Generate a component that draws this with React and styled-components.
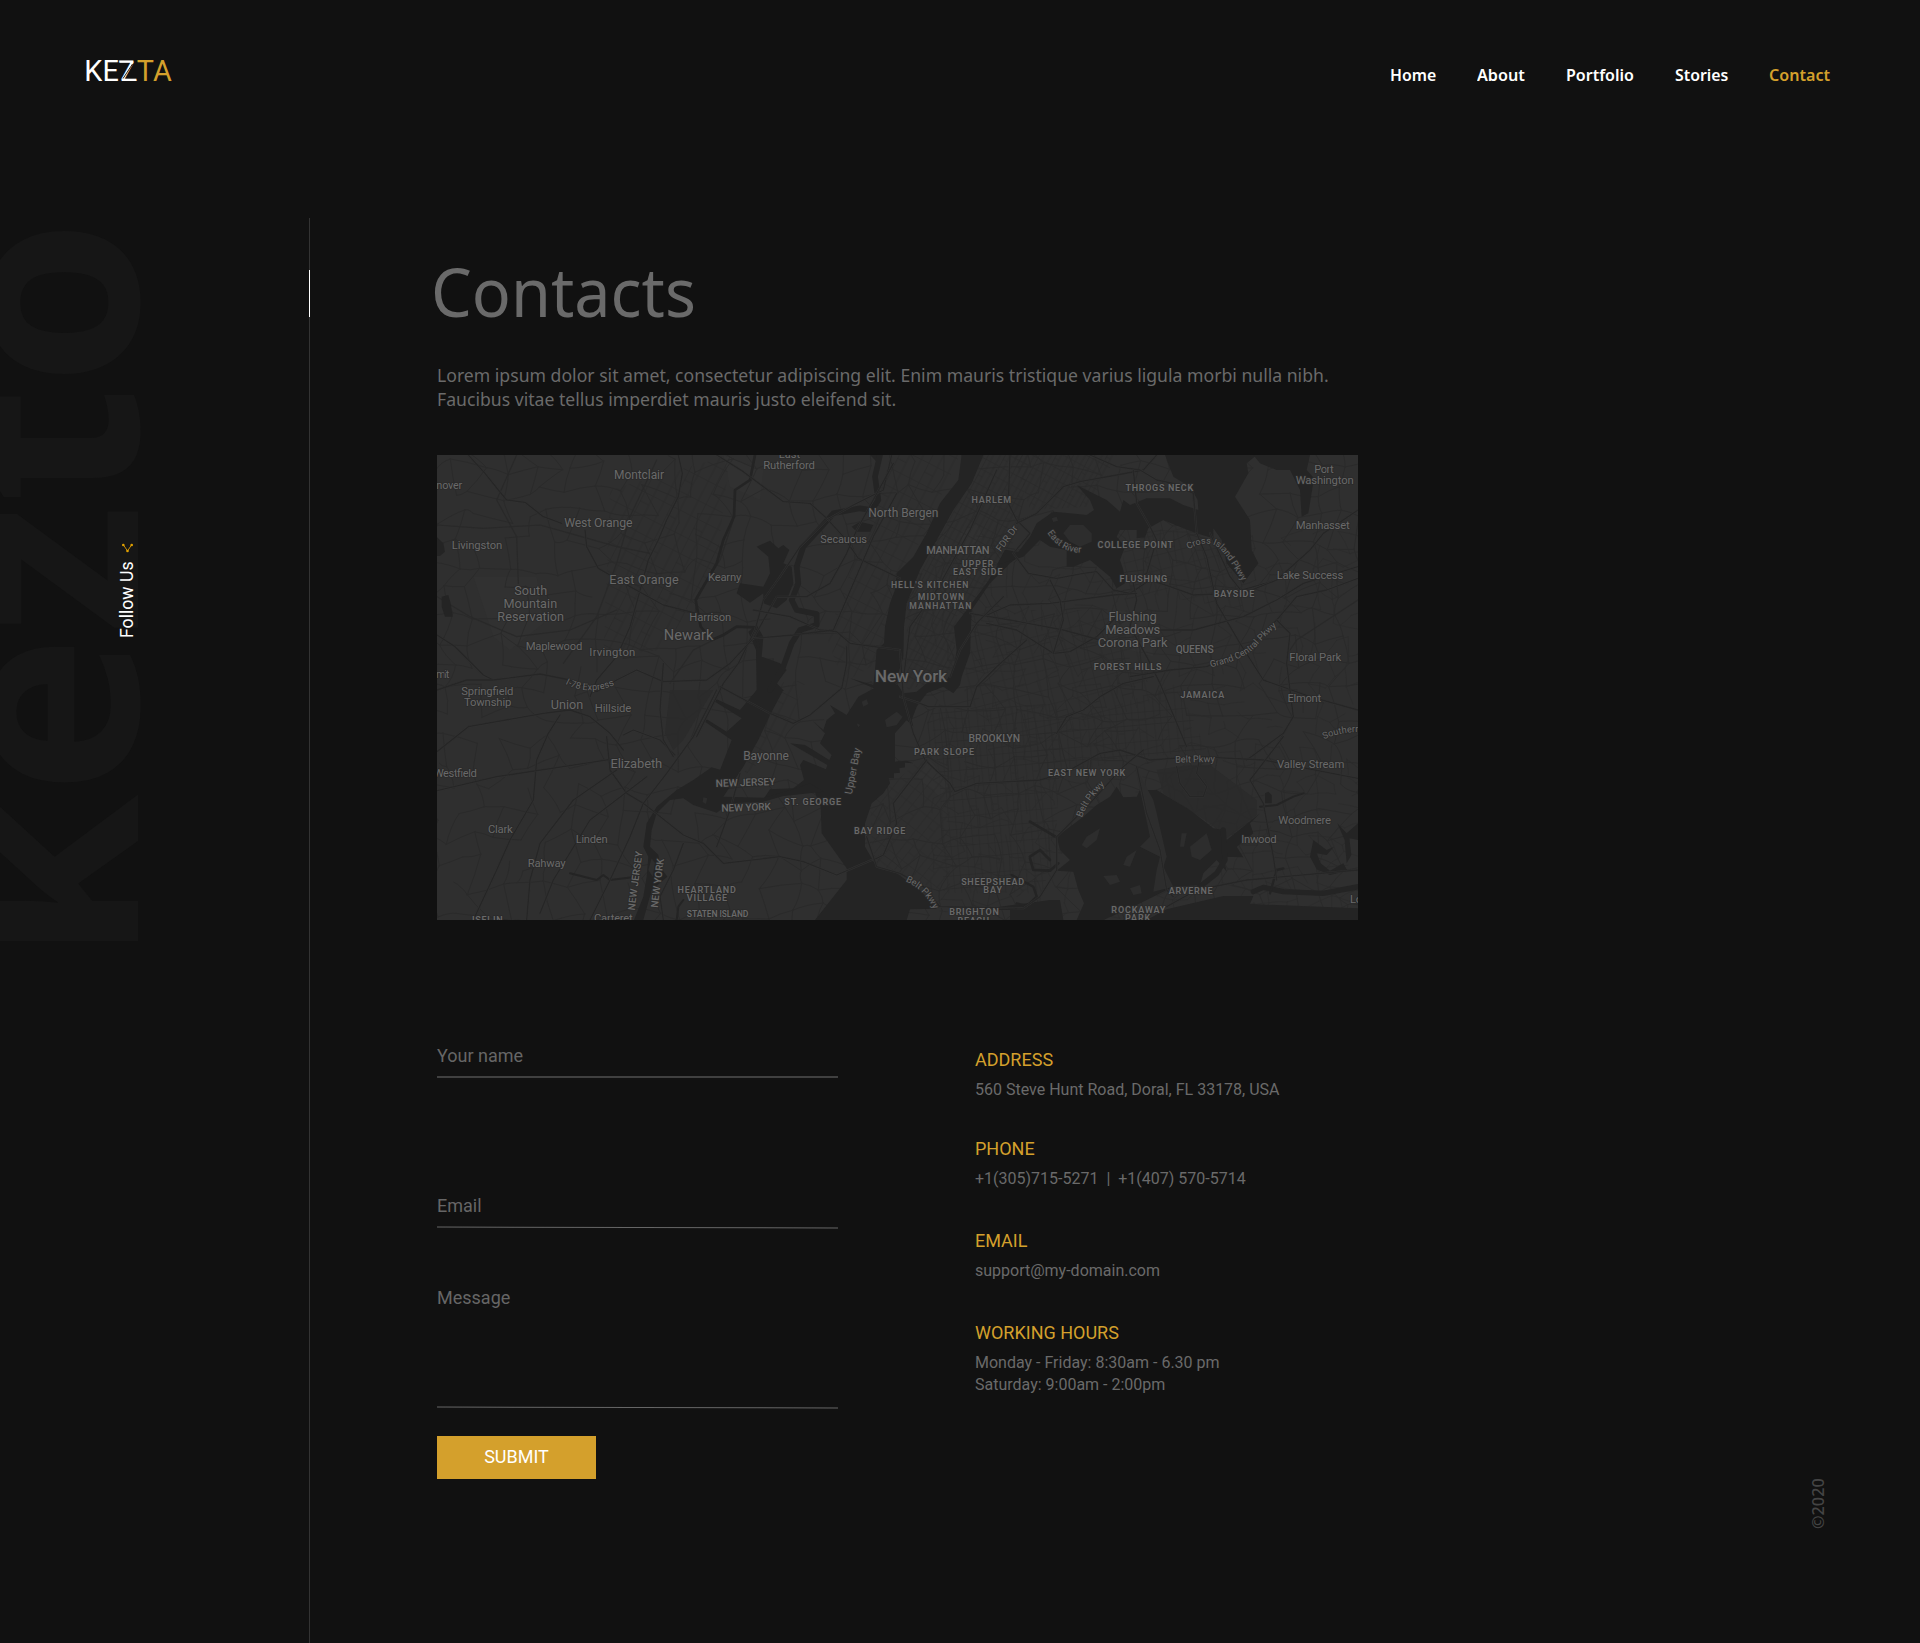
import React from "react";
import styled, { createGlobalStyle } from "styled-components";

const gold = "#d4a02c";
const grey = "#6a6a6a";

const GlobalStyle = createGlobalStyle`
  * { box-sizing: border-box; }
  body { margin: 0; background: #111111; }
`;

const Page = styled.div`
  width: 1920px;
  height: 1643px;
  display: flex;
  flex-direction: column;
  background: #111111;
  overflow: hidden;
  font-family: Roboto, "Liberation Sans", sans-serif;
`;

const Header = styled.header`
  height: 219px;
  flex: none;
  display: flex;
  justify-content: space-between;
  align-items: flex-start;
  padding: 54px 89px 0 84.2px;
`;

const Logo = styled.a`
  display: flex;
  font-size: 28.8px;
  line-height: 34px;
  letter-spacing: 0.25px;
  color: #ffffff;
`;

const LogoAccent = styled.span`
  color: ${gold};
`;

const LogoZ = styled.span`
  position: relative;
  transform: skewX(8deg);
`;

const LogoSlash = styled.svg`
  position: absolute;
  left: 0;
  top: 0;
`;

const Nav = styled.nav`
  display: flex;
  gap: 40.5px;
  padding-top: 9px;
`;

const NavLink = styled.a`
  width: ${(p) => p.$w}px;
  font: 600 16.6px/23px "Noto Sans", "Open Sans", sans-serif;
  white-space: nowrap;
  color: ${(p) => (p.$active ? gold : "#ffffff")};
`;

const Squeeze = styled.span`
  display: inline-block;
  white-space: nowrap;
  transform: scaleX(${(p) => p.$x});
  transform-origin: 0 50%;
`;

const Body = styled.div`
  flex: 1;
  display: flex;
`;

const Aside = styled.aside`
  position: relative;
  width: 309px;
  flex: none;
`;

const Watermark = styled.div`
  position: absolute;
  left: -102px;
  top: 743px;
  font: 700 270px/270px "Open Sans", "Noto Sans", sans-serif;
  color: #161616;
  white-space: nowrap;
  transform: rotate(-90deg);
  transform-origin: 0 0;
`;

const Follow = styled.a`
  position: absolute;
  left: 115px;
  top: 419px;
  display: flex;
  align-items: center;
  gap: 8.5px;
  font-size: 17.7px;
  line-height: 24px;
  color: #ffffff;
  white-space: nowrap;
  transform: rotate(-90deg);
  transform-origin: 0 0;
`;

const Rail = styled.div`
  width: 1px;
  flex: none;
  margin-top: -1px;
  padding-top: 52px;
  background: #333333;
`;

const RailMark = styled.div`
  height: 47px;
  background: #ffffff;
`;

const Main = styled.main`
  width: 921px;
  margin-left: 127px;
  padding-top: 36px;
  display: flex;
  flex-direction: column;
`;

const Title = styled.h1`
  margin: 0 0 36px -6.5px;
  font: 400 67px/72px "Noto Sans", "Open Sans", sans-serif;
  color: ${grey};
`;

const Intro = styled.p`
  margin: 0 0 44px;
  height: 48px;
  font: 400 18px/24px "Noto Sans", "Open Sans", sans-serif;
  color: ${grey};
`;

const MapFrame = styled.svg`
  display: block;
  width: 921px;
  height: 465px;
  margin-bottom: 124px;
`;

const Lower = styled.div`
  display: flex;
  gap: 137px;
`;

const Form = styled.form`
  width: 401px;
  display: flex;
  flex-direction: column;
`;

const Field = styled.label`
  display: flex;
  flex-direction: column;
  gap: ${(p) => p.$gap || 8}px;
  margin-bottom: ${(p) => p.$after}px;
  font-size: 18px;
  line-height: 24px;
  color: #666666;
`;

const Rule = styled.span`
  height: ${(p) => (p.$tilt ? 1 : 2)}px;
  margin-bottom: ${(p) => (p.$tilt ? 1 : 0)}px;
  background: ${(p) => (p.$tilt ? "#666666" : "#404040")};
  transform: ${(p) => (p.$tilt ? "translateY(1px) skewY(0.14deg)" : "none")};
`;

const Submit = styled.button`
  width: 159px;
  height: 43px;
  border: 0;
  padding: 0 0 2px;
  background: ${gold};
  color: #ffffff;
  font: 400 18px/41px Roboto, sans-serif;
`;

const Details = styled.div`
  padding-top: 4px;
`;

const DetailTitle = styled.h2`
  margin: 0 0 7px;
  font-weight: 400;
  font-size: 18px;
  line-height: 24px;
  color: ${gold};
`;

const DetailText = styled.p`
  margin: 0 0 ${(p) => p.$after || 39}px;
  font-size: 16px;
  line-height: 22px;
  color: ${grey};
  white-space: pre;
`;

const Copyright = styled.div`
  position: absolute;
  left: 1810px;
  top: 1529px;
  font: 500 16.3px/16px "Noto Sans", sans-serif;
  color: #444444;
  transform: rotate(-90deg);
  transform-origin: 0 0;
`;

/* ---------- map ---------- */

const LAND = "#2f2f2f";
const WATER = "#242424";

function makeRandom(seed) {
  let s = seed;
  return () => {
    s = (s * 16807) % 2147483647;
    return s / 2147483647;
  };
}

/* Irregular mesh of suburban streets. */
function streetMesh(seed, x0, y0, x1, y1, step, keep) {
  const rnd = makeRandom(seed);
  const cols = Math.ceil((x1 - x0) / step) + 1;
  const rows = Math.ceil((y1 - y0) / step) + 1;
  const pts = [];
  for (let r = 0; r < rows; r++) {
    for (let c = 0; c < cols; c++) {
      pts.push([
        Math.round(x0 + (c + (rnd() - 0.5) * 0.75 + (r % 2) * 0.3) * step),
        Math.round(y0 + (r + (rnd() - 0.5) * 0.75) * step),
      ]);
    }
  }
  let d = "";
  const join = (a, b) => {
    const mx = (a[0] + b[0]) / 2 + (rnd() - 0.5) * step * 0.25;
    const my = (a[1] + b[1]) / 2 + (rnd() - 0.5) * step * 0.25;
    d += `M${a[0]} ${a[1]}Q${mx | 0} ${my | 0} ${b[0]} ${b[1]}`;
  };
  for (let r = 0; r < rows; r++) {
    for (let c = 0; c < cols; c++) {
      const i = r * cols + c;
      if (c < cols - 1 && rnd() < keep) join(pts[i], pts[i + 1]);
      if (r < rows - 1 && rnd() < keep) join(pts[i], pts[i + cols]);
    }
  }
  return d;
}

const mesh = streetMesh(77, -20, -20, 2820, 1440, 74, 0.8);
const fineMesh = streetMesh(4242, 1500, 250, 2820, 1400, 46, 0.5);

const gridPatterns = [
  ["gManhattan", 28, 15, 38],
  ["gBrooklyn", -5, 22, 44],
  ["gQueens", -14, 34, 52],
  ["gJersey", 27, 30, 58],
  ["gRidge", 38, 26, 48],
];

const gridAreas = [
  ["gManhattan", "M1660 15L1800 15L1760 260L1690 380L1580 500L1570 680L1430 720L1430 450Z"],
  ["gJersey", "M1390 15L1590 15L1420 380L1340 640L1240 700L1190 560Z"],
  ["gBrooklyn", "M1500 780L1900 760L1880 1120L1840 1330L1540 1330L1530 1000Z"],
  ["gRidge", "M1480 920L1560 1000L1560 1330L1330 1250L1320 1060Z"],
  ["gQueens", "M1620 480L2100 480L2160 760L1780 900L1600 760Z"],
  ["gQueens", "M2080 200L2360 220L2440 480L2080 420Z"],
  ["gJersey", "M540 120L900 15L860 340L700 600L520 620Z"],
  ["gJersey", "M1010 700L1130 690L1050 880L940 980Z"],
  ["gBrooklyn", "M1800 860L2240 700L2330 900L2060 930L1840 1000Z"],
  ["gManhattan", "M1750 15L2060 15L1980 170L1800 180Z"],
];

const JERSEY_ROADS = [
  "M115 15L165 70L205 120L230 150L285 157L340 200L395 220",
  "M745 15L757 70L745 140L710 210L685 270L655 330L625 440L600 530L560 620L500 690L480 740",
  "M860 15L940 65L1060 155L1140 160L1190 205L1240 260L1285 325L1410 385",
  "M1385 15L1360 120L1270 165L1190 210L1110 290L1050 380L1000 450L975 540L925 640L880 700L800 860",
  "M465 240L470 290L505 355L600 410L700 465L800 490",
  "M21 555L75 590L160 675L190 690L330 672L420 690L500 725L560 690L620 660L700 695L830 690L900 640L970 565",
  "M970 565L1040 440L1130 440L1200 400L1250 310L1280 240L1390 40",
  "M970 480L1080 500L1170 540L1220 545L1260 580L1410 600",
  "M970 565L1090 555L1210 540L1330 260L1400 130",
  "M1250 590L1250 640L1235 715L1140 795L1090 820L1020 790L870 710",
  "M21 720L110 690L190 690",
  "M21 905L115 830L200 815L340 790L420 780L480 800L540 850L580 900",
  "M390 795L355 850L320 930L310 1050L240 1170L200 1260L130 1410",
  "M21 1022L200 980L400 950L560 925",
  "M580 855L610 840L690 870L735 915",
  "M530 860L540 960L590 1030L640 1060L760 1155L820 1180L880 1240L1050 1220L1120 1235L1220 1275L1360 1215L1400 1120",
  "M860 720L790 860L710 970L640 1060L600 1160L540 1290L480 1410",
  "M700 640L690 780L700 870L730 920",
  "M560 960L430 1050L330 1180L300 1290L290 1410",
  "M650 980L480 1110L370 1290L330 1390",
  "M930 970L900 1080L860 1190",
  "M760 1180L730 1260L690 1340L700 1410",
];

const CITY_ROADS = [
  "M1740 15L1735 160L1760 210L1800 250L1750 310L1795 370L1880 385L1960 370L2000 365L2050 420L2100 430L2160 390L2220 410L2290 435L2400 430L2540 390",
  "M1760 220L1820 190L1900 110L1950 95L2060 75L2140 60L2180 15",
  "M1980 15L2060 50L2130 60L2180 90L2230 100L2290 130L2300 250",
  "M2110 60L2120 160L2160 230L2180 270L2150 370L2110 400L2120 450L2100 530L2150 620L2190 700L2270 890",
  "M2300 250L2330 320L2360 460L2430 580L2500 690L2640 740L2784 780",
  "M1660 500L1740 465L1860 460L2050 435L2120 430",
  "M1670 520L1760 540L1870 610L1920 605L2000 560L2070 490",
  "M1620 490L1740 510L1900 540L2010 570",
  "M2190 540L2290 540L2440 500L2540 450L2620 400L2784 350",
  "M2100 680L2220 660L2330 650L2450 600L2540 510L2600 440L2690 420L2784 385",
  "M2540 510L2580 550L2570 640L2590 800L2560 850L2450 930",
  "M2540 390L2440 430L2400 380L2340 250",
  "M1880 850L1910 800L1960 780L2010 740L2080 700L2170 680",
  "M1410 740L1470 760L1495 770L1620 770L1640 710L1700 650L1790 570",
  "M1410 600L1420 740L1450 850L1485 930L1560 1000L1575 1025L1640 1000L1830 990L1900 970L2010 910L2070 900L2160 930L2300 920L2500 930L2784 985",
  "M1490 930L1390 1060L1400 1120L1360 1215L1330 1230",
  "M1310 1160L1340 1250L1410 1270L1480 1310L1530 1370L1780 1375L1830 1340L1880 1260L1880 1160L1980 1060L2080 950L2140 900",
  "M2120 950L2150 1090L2190 1200L2210 1320L2230 1340",
  "M2240 950L2250 1000L2280 1040L2320 1040L2330 1010L2300 970L2310 920",
  "M2210 1370L2300 1320L2450 1290L2784 1260",
  "M2540 1290L2530 1220L2500 1060L2460 990L2560 860",
  "M1700 60L1620 240L1520 420L1440 530L1420 690L1400 700",
  "M1720 440L1640 520L1590 600L1560 680",
  "M2784 180L2680 250L2640 300L2540 390",
  "M1860 390L1890 450L1900 510L1870 610",
];

const MINOR_ROADS = [
  "M680 30L600 200L560 340L500 500L400 640",
  "M910 210L870 330L800 440L795 500",
  "M720 700L790 600L850 570",
  "M2784 450L2600 570L2580 600",
  "M21 225L160 235L330 225L420 250L560 290L660 310",
  "M260 15L200 150L260 260L265 400",
  "M21 440L120 500L260 560L420 540L560 480",
];

const WATER_SHAPES = [
  "M1595 15L1585 90L1530 160L1490 250L1450 320L1400 370L1395 420L1380 460L1365 530L1362 580L1340 600L1335 660L1330 705L1260 685L1332 715L1285 740L1250 795L1200 765L1215 790L1190 810L1180 840L1148 812L1185 850L1170 880L1205 915L1198 930L1125 885L1080 880L1192 945L1188 958L1120 930L1110 945L1122 990L1090 1015L1020 1018L1000 1048L1150 1015L1172 1070L1175 1150L1250 1255L1250 1290L1155 1410L1430 1410L1440 1378L1520 1376L1470 1320L1400 1270L1340 1250L1305 1190L1305 1120L1325 1060L1360 1030L1380 1000L1376 985L1392 985L1392 970L1410 968L1408 955L1425 952L1425 938L1450 940L1430 932L1395 935L1395 850L1430 810L1450 830L1445 810L1460 770L1490 730L1540 710L1570 730L1590 705L1595 680L1620 610L1625 480L1680 400L1740 340L1780 310L1725 300L1710 335L1670 400L1610 480L1572 530L1580 600L1570 660L1550 690L1490 700L1460 725L1420 730L1400 700L1405 670L1420 620L1422 530L1430 460L1470 360L1520 270L1570 180L1625 100L1660 15Z",
  "M1700 345L1725 300L1765 305L1800 260L1820 220L1870 185L1920 190L1970 195L1992 180L1980 150L1940 105L1980 125L2030 150L2070 185L2080 150L2100 165L2150 145L2220 145L2260 165L2305 180L2303 150L2280 110L2230 80L2205 15L2480 15L2450 40L2455 70L2415 140L2460 210L2465 300L2485 340L2440 400L2390 340L2375 270L2350 235L2350 265L2300 250L2260 235L2200 210L2155 235L2145 262L2120 265L2120 240L2070 240L2060 260L2085 290L2070 330L2080 360L2085 400L2060 415L2040 380L1980 330L1930 350L1910 350L1910 300L1860 290L1830 270L1780 320Z",
  "M2470 15L2640 15L2630 60L2652 85L2635 190L2615 200L2610 120L2580 60L2540 60L2490 40Z",
  "M2120 1040L2080 1042L2060 1010L2040 1040L2000 1065L1960 1100L1880 1160L1890 1200L1920 1230L1880 1262L1930 1265L1945 1320L1962 1360L1940 1410L2020 1410L2100 1375L2170 1340L2230 1310L2310 1305L2320 1270L2360 1230L2390 1265L2380 1220L2440 1222L2420 1190L2470 1150L2460 1120L2490 1090L2390 1170L2380 1140L2350 1135L2280 1080L2180 1020L2130 1020Z",
  "M2150 1410L2210 1378L2380 1338L2470 1338L2460 1362L2784 1375L2784 1410Z",
  "M980 720L1060 720L1020 795L985 870L940 950L900 1010L880 1040L1000 1043L1090 1018L1140 1000L1180 1025L1060 1038L1000 1055L900 1060L860 1088L790 1065L760 1045L720 1050L680 1090L665 1140L660 1190L685 1215L690 1250L712 1280L665 1320L640 1410L612 1410L640 1340L650 1280L655 1220L640 1190L650 1120L680 1070L740 1020L790 990L845 952L870 960L905 870L825 815L830 808L890 845L935 805L855 755L860 748L930 780Z",
  "M980 722L978 600L955 545L980 525L1000 560L995 620L1050 640L1070 660L1040 700L1062 722Z",
  "M980 290L1020 272L1045 295L1060 285L1078 300L1060 340L1085 350L1090 400L1070 450L1040 475L1000 460L1000 430L960 458L920 430L930 400L1000 410L1020 370L1015 320Z",
  "M21 262L40 280L45 305L30 318L21 318Z",
  "M35 440L55 435L62 460L68 500L45 500L35 470Z",
  "M1265 230L1290 215L1330 225L1320 245L1280 245Z",
  "M1320 15L1355 15L1340 35Z",
  "M1640 1380L1860 1350L1890 1350L1900 1410L1740 1410L1740 1380Z",
  "M2515 1025L2525 1035L2525 1060L2505 1060L2505 1030Z",
  "M2650 1170L2690 1200L2712 1190L2690 1215L2660 1210L2672 1240L2700 1262L2740 1240L2752 1262L2700 1275L2660 1258L2640 1220Z",
  "M2722 1120L2750 1150L2784 1120L2784 1170L2758 1165L2764 1215L2750 1240L2744 1170Z",
];

const WATER_LINES = [
  ["M1350 15L1335 80L1345 150L1325 180L1290 175L1210 190L1170 235L1120 290L1100 350L1105 400L1085 450L1100 480L1160 492L1160 525L1110 540L1085 580L1060 650L1020 720", 17],
  ["M985 590L975 532L920 530L880 555L845 570L812 530L797 450L860 340L880 270L912 200L915 120L960 90L975 15", 8],
  ["M420 1270L500 1290L520 1275L540 1290L620 1280", 6],
  ["M2470 1325L2500 1312L2560 1325L2680 1330L2784 1310", 16],
  ["M1800 1115L1880 1162", 8],
  ["M1800 1220L1830 1200L1860 1230M1800 1225L1810 1260L1860 1262L1885 1240", 8],
  ["M1745 1275L1810 1310L1820 1340L1790 1368L1760 1360", 7],
  ["M2380 1140L2385 1230L2360 1270L2310 1310", 16],
  ["M2520 1330L2540 1260L2560 1255", 7],
  ["M2490 1070L2540 1065L2590 1040L2620 1030", 6],
  ["M740 1410L745 1370L760 1350", 6],
];

const ISLANDS = [
  "M2115 950L2170 1050L2180 1090L2210 1220L2200 1250L2230 1310L2170 1325L2180 1260L2190 1220L2130 1190L2160 1160L2145 1090Z",
  "M2010 1135L2000 1170L1970 1195L1955 1185L1970 1160Z",
  "M2120 1200L2100 1250L2080 1245L2090 1220Z",
  "M2020 1278L2060 1275L2070 1295L2040 1305Z",
  "M2280 1190L2330 1150L2345 1200L2310 1230L2285 1220Z",
  "M2255 1150L2270 1150L2262 1190L2250 1190Z",
  "M2100 1315L2130 1305L2135 1330L2110 1335Z",
  "M1920 225L1960 225L1985 250L1985 275L1950 290L1920 275L1900 250Z",
  "M1865 205L1880 200L1884 212L1870 216Z",
  "M1365 810L1400 785L1418 800L1400 825L1370 832Z",
  "M1295 755L1310 748L1315 762L1300 770Z",
  "M665 1225L675 1240L668 1280L655 1260Z",
  "M1280 820L1290 825L1285 832Z",
  "M820 1042L832 1045L828 1062L818 1056Z",
];

/* text, centre x, baseline y, width, font size, weight, rotation */
const LABELS = [
  ["Montclair", 627, 87, 150, 36],
  ["nover", 58, 117, 78, 33],
  ["West Orange", 505, 231, 205, 37],
  ["Livingston", 141, 298, 152, 34],
  ["East Orange", 642, 403, 208, 38],
  ["Kearny", 884, 392, 100, 34],
  ["South", 302, 436, 99, 38],
  ["Mountain", 301, 475, 161, 38],
  ["Reservation", 302, 514, 200, 38],
  ["Harrison", 841, 512, 126, 34],
  ["Newark", 776, 571, 149, 44],
  ["Maplewood", 372, 599, 170, 34],
  ["Irvington", 547, 618, 138, 34],
  ["mit", 38, 683, 40, 33],
  ["East", 1078, 25, 64, 33],
  ["Rutherford", 1077, 57, 155, 34],
  ["North Bergen", 1420, 201, 210, 36],
  ["Secaucus", 1241, 280, 140, 33],
  ["New York", 1443, 697, 217, 52, 500],
  ["HARLEM", 1684, 158, 119, 27, 600],
  ["THROGS NECK", 2188, 122, 203, 27, 600],
  ["Port", 2682, 69, 58, 34],
  ["Washington", 2684, 102, 174, 34],
  ["Manhasset", 2678, 237, 162, 34],
  ["Lake Success", 2640, 388, 200, 34],
  ["MANHATTAN", 1584, 313, 190, 33, 500],
  ["UPPER", 1643, 350, 94, 26, 600],
  ["EAST SIDE", 1643, 375, 148, 26, 600],
  ["HELL'S KITCHEN", 1499, 414, 232, 26, 600],
  ["MIDTOWN", 1533, 450, 139, 26, 600],
  ["MANHATTAN", 1531, 476, 186, 26, 600],
  ["COLLEGE POINT", 2116, 294, 227, 27, 600],
  ["FLUSHING", 2140, 395, 143, 27, 600],
  ["BAYSIDE", 2412, 442, 122, 27, 600],
  ["Flushing", 2108, 512, 145, 39],
  ["Meadows", 2108, 551, 165, 39],
  ["Corona Park", 2108, 590, 210, 39],
  ["QUEENS", 2294, 608, 114, 31, 500],
  ["FOREST HILLS", 2093, 660, 203, 27, 600],
  ["Floral Park", 2656, 633, 156, 34],
  ["JAMAICA", 2317, 744, 131, 27, 600],
  ["Elmont", 2623, 756, 101, 34],
  ["Springfield", 172, 735, 157, 34],
  ["Township", 173, 769, 142, 34],
  ["Union", 411, 776, 97, 38],
  ["Hillside", 549, 786, 110, 34],
  ["Bayonne", 1008, 929, 137, 36],
  ["Elizabeth", 619, 955, 155, 39],
  ["Westfield", 76, 981, 130, 34],
  ["NEW JERSEY", 947, 1008, 179, 31, 500, -2],
  ["NEW YORK", 949, 1083, 149, 31, 500, -2],
  ["ST. GEORGE", 1148, 1065, 170, 27, 600],
  ["BAY RIDGE", 1349, 1151, 154, 27, 600],
  ["Clark", 211, 1149, 74, 34],
  ["Linden", 485, 1179, 96, 34],
  ["Rahway", 350, 1251, 113, 34],
  ["HEARTLAND", 830, 1329, 175, 27, 600],
  ["VILLAGE", 831, 1354, 121, 27, 600],
  ["STATEN ISLAND", 863, 1401, 185, 26, 600],
  ["Carteret", 550, 1415, 116, 34],
  ["ISELIN", 172, 1420, 92, 27, 600],
  ["BROOKLYN", 1693, 876, 155, 31, 500],
  ["PARK SLOPE", 1542, 914, 180, 27, 600],
  ["EAST NEW YORK", 1970, 978, 232, 27, 600],
  ["Belt Pkwy", 2295, 937, 119, 28, 400, -1],
  ["Valley Stream", 2642, 954, 202, 34],
  ["Woodmere", 2624, 1123, 158, 34],
  ["Inwood", 2487, 1179, 106, 34],
  ["SHEEPSHEAD", 1688, 1304, 189, 27, 600],
  ["BAY", 1688, 1330, 57, 27, 600],
  ["BRIGHTON", 1632, 1396, 149, 27, 600],
  ["BEACH", 1630, 1423, 95, 27, 600],
  ["ARVERNE", 2282, 1332, 131, 27, 600],
  ["ROCKAWAY", 2125, 1388, 162, 27, 600],
  ["PARK", 2123, 1413, 76, 27, 600],
  ["Long Beach", 2845, 1360, 170, 34],
];

/* text, path, font size, weight */
const CURVED = [
  ["FDR Dr", "M1712 307L1764 236", 29],
  ["East River", "M1852 248Q1890 308 1955 308", 28],
  ["Cross Island Pkwy", "M2275 298Q2340 262 2375 302Q2405 335 2452 424", 27],
  ["Grand Central Pkwy", "M2342 652Q2440 630 2478 590Q2503 560 2560 512", 27.5],
  ["I-78 Express", "M406 702Q480 740 560 702", 28],
  ["Upper Bay", "M1265 1034L1294 886", 31],
  ["NEW JERSEY", "M614 1382L640 1186", 30, 500],
  ["NEW YORK", "M683 1374L704 1210", 30, 500],
  ["Belt Pkwy", "M1956 1103Q1975 1045 2034 996", 28],
  ["Belt Pkwy", "M1426 1294Q1490 1322 1512 1384", 28],
  ["Southern", "M2682 868Q2730 845 2800 846", 28],
];

const Road = styled.path`
  fill: none;
  stroke: ${(p) => p.$tone};
  stroke-width: ${(p) => p.$size};
  stroke-linejoin: round;
  stroke-linecap: round;
`;

const MapLabel = styled.text`
  font-family: Roboto, sans-serif;
  font-size: ${(p) => p.$size}px;
  font-weight: ${(p) => p.$weight || 400};
  fill: #696969;
  stroke: #2a2a2a;
  stroke-width: 5px;
  stroke-linejoin: round;
  paint-order: stroke;
`;

function CityMap() {
  return (
    <MapFrame viewBox="21 15 2763 1395" preserveAspectRatio="none" role="img" aria-label="Map of New York">
      <defs>
        {gridPatterns.map(([id, angle, w, h]) => (
          <pattern key={id} id={id} width={w * 3} height={h * 2} patternUnits="userSpaceOnUse" patternTransform={`rotate(${angle})`}>
            <path
              d={`M1 0V${h * 2}M${w} 0V${h * 2}M${w * 2.2} 0V${h * 2}M0 1H${w * 3}M0 ${h * 0.9}H${w * 3}M0 ${h * 1.4}H${w}`}
              stroke="#292929"
              strokeWidth="2.2"
              fill="none"
            />
          </pattern>
        ))}
        {CURVED.map(([, d], i) => (
          <path key={i} id={`curve${i}`} d={d} />
        ))}
      </defs>
      <rect x="0" y="0" width="2800" height="1440" fill={LAND} />
      <path d="M720 720L850 720L760 870L730 900L705 850ZM2180 960L2240 950L2340 945L2480 1050L2480 1095L2390 1165L2340 1120L2200 1030Z" fill="#2b2b2b" />
      <path d="M130 380L320 380L340 520L240 600L190 560ZM1590 250L1640 220L1660 260L1600 300ZM2060 480L2160 500L2170 620L2100 600ZM1500 930L1560 1000L1530 1040L1460 980ZM880 15L1000 60L990 150L900 110Z" fill="#313131" />
      <Road d={mesh} $tone="#2a2a2a" $size={3} />
      <Road d={fineMesh} $tone="#2b2b2b" $size={2.2} />
      {gridAreas.map(([id, d]) => (
        <path key={d} d={d} fill={`url(#${id})`} />
      ))}
      {MINOR_ROADS.map((d) => (
        <Road key={d} d={d} $tone="#292929" $size={3.6} />
      ))}
      {WATER_SHAPES.map((d) => (
        <path key={d} d={d} fill={WATER} />
      ))}
      {WATER_LINES.map(([d, w]) => (
        <Road key={d} d={d} $tone={WATER} $size={w} />
      ))}
      {ISLANDS.map((d) => (
        <path key={d} d={d} fill="#2d2d2d" />
      ))}
      {[...JERSEY_ROADS, ...CITY_ROADS].map((d) => (
        <g key={d}>
          <Road d={d} $tone="#333333" $size={6.2} />
          <Road d={d} $tone="#262626" $size={4} />
        </g>
      ))}
      {LABELS.map(([text, x, y, w, size, weight, turn]) => (
        <MapLabel
          key={text + x}
          x={x}
          y={y}
          textAnchor="middle"
          textLength={w}
          transform={turn ? `rotate(${turn} ${x} ${y})` : undefined}
          $size={size}
          $weight={weight}
        >
          {text}
        </MapLabel>
      ))}
      {CURVED.map(([text, , size, weight], i) => (
        <MapLabel key={text + i} $size={size} $weight={weight}>
          <textPath href={`#curve${i}`}>{text}</textPath>
        </MapLabel>
      ))}
    </MapFrame>
  );
}

const links = [
  ["Home", 46.5, 0.955],
  ["About", 48, 0.975],
  ["Portfolio", 69, 0.965],
  ["Stories", 53.5, 0.955],
  ["Contact", 62, 0.97],
];

const details = [
  ["ADDRESS", "560 Steve Hunt Road, Doral, FL 33178, USA", 36],
  ["PHONE", "+1(305)715-5271  |  +1(407) 570-5714"],
  ["EMAIL", "support@my-domain.com"],
  ["WORKING HOURS", "Monday - Friday: 8:30am - 6.30 pm\nSaturday: 9:00am - 2:00pm"],
];

export default function App() {
  return (
    <Page>
      <GlobalStyle />
      <Header>
        <Logo>
          KE
          <LogoZ>
            Z
            <LogoSlash width="18" height="34" viewBox="0 0 18 34">
              <path d="M3 24.5L14.5 10" stroke="#111111" strokeWidth="0.9" />
            </LogoSlash>
          </LogoZ>
          <LogoAccent>TA</LogoAccent>
        </Logo>
        <Nav>
          {links.map(([label, w, x]) => (
            <NavLink key={label} $w={w} $active={label === "Contact"}>
              <Squeeze $x={x}>{label}</Squeeze>
            </NavLink>
          ))}
        </Nav>
      </Header>
      <Body>
        <Aside>
          <Watermark>kezto</Watermark>
          <Follow>
            Follow Us
            <svg width="10" height="13" viewBox="0 0 10 13">
              <path d="M8 2.5L2 6.5L8 10.5" fill="none" stroke="#d99a00" strokeWidth="0.9" />
              <circle cx="8" cy="2.3" r="1.3" fill="#e0a000" />
              <circle cx="2" cy="6.5" r="1.3" fill="#e0a000" />
              <circle cx="8" cy="10.7" r="1.3" fill="#e0a000" />
            </svg>
          </Follow>
        </Aside>
        <Rail>
          <RailMark />
        </Rail>
        <Main>
          <Title>
            <Squeeze $x={0.965}>Contacts</Squeeze>
          </Title>
          <Intro>
            <Squeeze $x={0.979}>
              Lorem ipsum dolor sit amet, consectetur adipiscing elit. Enim mauris tristique varius ligula morbi nulla nibh.
              <br />
              Faucibus vitae tellus imperdiet mauris justo eleifend sit.
            </Squeeze>
          </Intro>
          <CityMap />
          <Lower>
            <Form>
              <Field $after={116}>
                Your name
                <Rule />
              </Field>
              <Field $after={58}>
                Email
                <Rule $tilt />
              </Field>
              <Field $gap={96} $after={28}>
                Message
                <Rule $tilt />
              </Field>
              <Submit type="button">SUBMIT</Submit>
            </Form>
            <Details>
              {details.map(([title, text, after]) => (
                <React.Fragment key={title}>
                  <DetailTitle>{title}</DetailTitle>
                  <DetailText $after={after}>{text}</DetailText>
                </React.Fragment>
              ))}
            </Details>
          </Lower>
        </Main>
      </Body>
      <Copyright>©2020</Copyright>
    </Page>
  );
}
